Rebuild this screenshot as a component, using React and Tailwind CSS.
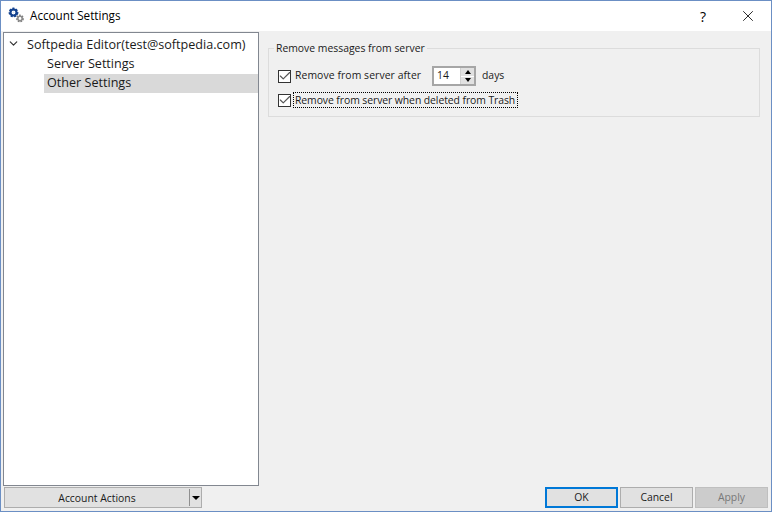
import { Check, ChevronDown, X } from "lucide-react";

function GearIcon() {
  return (
    <svg width="18" height="16" viewBox="0 0 18 16" className="-mt-[2px] shrink-0">
      <g fill="none" stroke="#12418e" strokeWidth="2.6" strokeDasharray="1.9 1.2">
        <circle cx="6.5" cy="5.5" r="3.6" />
      </g>
      <circle cx="6.5" cy="5.5" r="3" fill="none" stroke="#12418e" strokeWidth="2" />
      <circle cx="6.5" cy="5.5" r="1" fill="#dfe8f5" />
      <g fill="none" stroke="#7d7d7d" strokeWidth="2" strokeDasharray="1.5 1">
        <circle cx="13" cy="11.5" r="2.9" />
      </g>
      <circle cx="13" cy="11.5" r="2.2" fill="none" stroke="#8a8a8a" strokeWidth="1.5" />
    </svg>
  );
}

function CheckBox() {
  return (
    <span className="flex h-[13px] w-[13px] shrink-0 items-center justify-center border border-[#333333] bg-white">
      <Check size={14} strokeWidth={2} className="shrink-0 text-[#555555]" />
    </span>
  );
}

function Spinner() {
  return (
    <div className="flex h-[20px] w-[44px] items-center justify-between border-2 border-[#a6a6a6] bg-white pl-[3px]">
      <span className="text-[#1a1a1a]">14</span>
      <div className="flex h-full w-[14px] flex-col gap-px border-l border-[#d0d0d0] bg-white">
        <div className="flex flex-1 items-center justify-center bg-[#e1e1e1]">
          <span className="h-0 w-0 border-x-[3px] border-b-[4px] border-x-transparent border-b-black" />
        </div>
        <div className="flex flex-1 items-center justify-center bg-[#e1e1e1]">
          <span className="h-0 w-0 border-x-[3px] border-t-[4px] border-x-transparent border-t-black" />
        </div>
      </div>
    </div>
  );
}

export default function App() {
  return (
    <div className="flex h-[512px] w-[772px] flex-col overflow-hidden border border-[#6b8fc4] bg-[#f0f0f0] font-['Open_Sans','Noto_Sans',sans-serif] text-[10.4px] text-[#1a1a1a]">
      {/* title bar */}
      <div className="flex h-[30px] shrink-0 items-center bg-white pl-[6px]">
        <GearIcon />
        <span className="ml-[5px] text-[11.7px] text-black">Account Settings</span>
        <span className="ml-auto mr-[33px] text-[14px] text-black">?</span>
        <X size={18} strokeWidth={1.1} className="mr-[14px] text-black" />
      </div>

      <div className="flex min-h-0 flex-1 pl-[2px]">
        {/* left side */}
        <div className="flex w-[256px] shrink-0 flex-col pb-[3px] pt-px">
          <div className="min-h-0 flex-1 border border-[#828790] bg-white">
            <div className="flex h-[19px] items-center pl-[3px] pt-[6px] text-[12.6px]">
              <ChevronDown size={13} strokeWidth={2.2} className="mb-[4px] text-[#333333]" />
              <span className="ml-[7px]">Softpedia Editor(test@softpedia.com)</span>
            </div>
            <div className="mt-[3px] flex h-[19px] items-center pl-[43px] text-[12.6px]">
              Server Settings
            </div>
            <div className="ml-[40px] flex h-[19px] items-center bg-[#d9d9d9] pl-[3px] text-[12.6px]">
              Other Settings
            </div>
          </div>
          <div className="ml-px mt-px flex h-[21px] w-[198px] items-stretch border border-[#adadad] bg-[#e1e1e1]">
            <span className="flex flex-1 items-center justify-center pt-[2px]">Account Actions</span>
            <span className="my-px w-px bg-[#8f8f8f]" />
            <span className="flex w-[11px] items-center justify-center">
              <span className="h-0 w-0 border-x-[4px] border-t-[4px] border-x-transparent border-t-black" />
            </span>
          </div>
        </div>

        {/* right side */}
        <div className="flex min-w-0 flex-1 flex-col pb-[3px] pl-[9px] pr-[11px]">
          <fieldset className="mt-[10px] h-[76px] border border-[#dcdcdc] pl-[9px]">
            <legend className="ml-[-4px] px-[2px] leading-[14px]">Remove messages from server</legend>
            <div className="mt-[11px] flex h-[20px] items-center">
              <CheckBox />
              <span className="ml-[4px] w-[137px] tracking-[0.08px]">Remove from server after</span>
              <Spinner />
              <span className="ml-[6px]">days</span>
            </div>
            <div className="mt-[5px] flex h-[18px] items-center">
              <CheckBox />
              <span className="ml-[2px] border border-dotted border-black pl-px pr-[2px] leading-[14px] tracking-[-0.07px]">
                Remove from server when deleted from Trash
              </span>
            </div>
          </fieldset>

          <div className="-mr-[8px] mt-auto flex justify-end gap-[2px]">
            <button className="h-[21px] w-[73px] border-2 border-[#0078d7] bg-[#e1e1e1] pt-px">OK</button>
            <button className="h-[21px] w-[73px] border border-[#adadad] bg-[#e1e1e1] pt-px">Cancel</button>
            <button className="h-[21px] w-[73px] border border-[#bfbfbf] bg-[#cccccc] pt-px text-[#787878]">Apply</button>
          </div>
        </div>
      </div>
    </div>
  );
}
